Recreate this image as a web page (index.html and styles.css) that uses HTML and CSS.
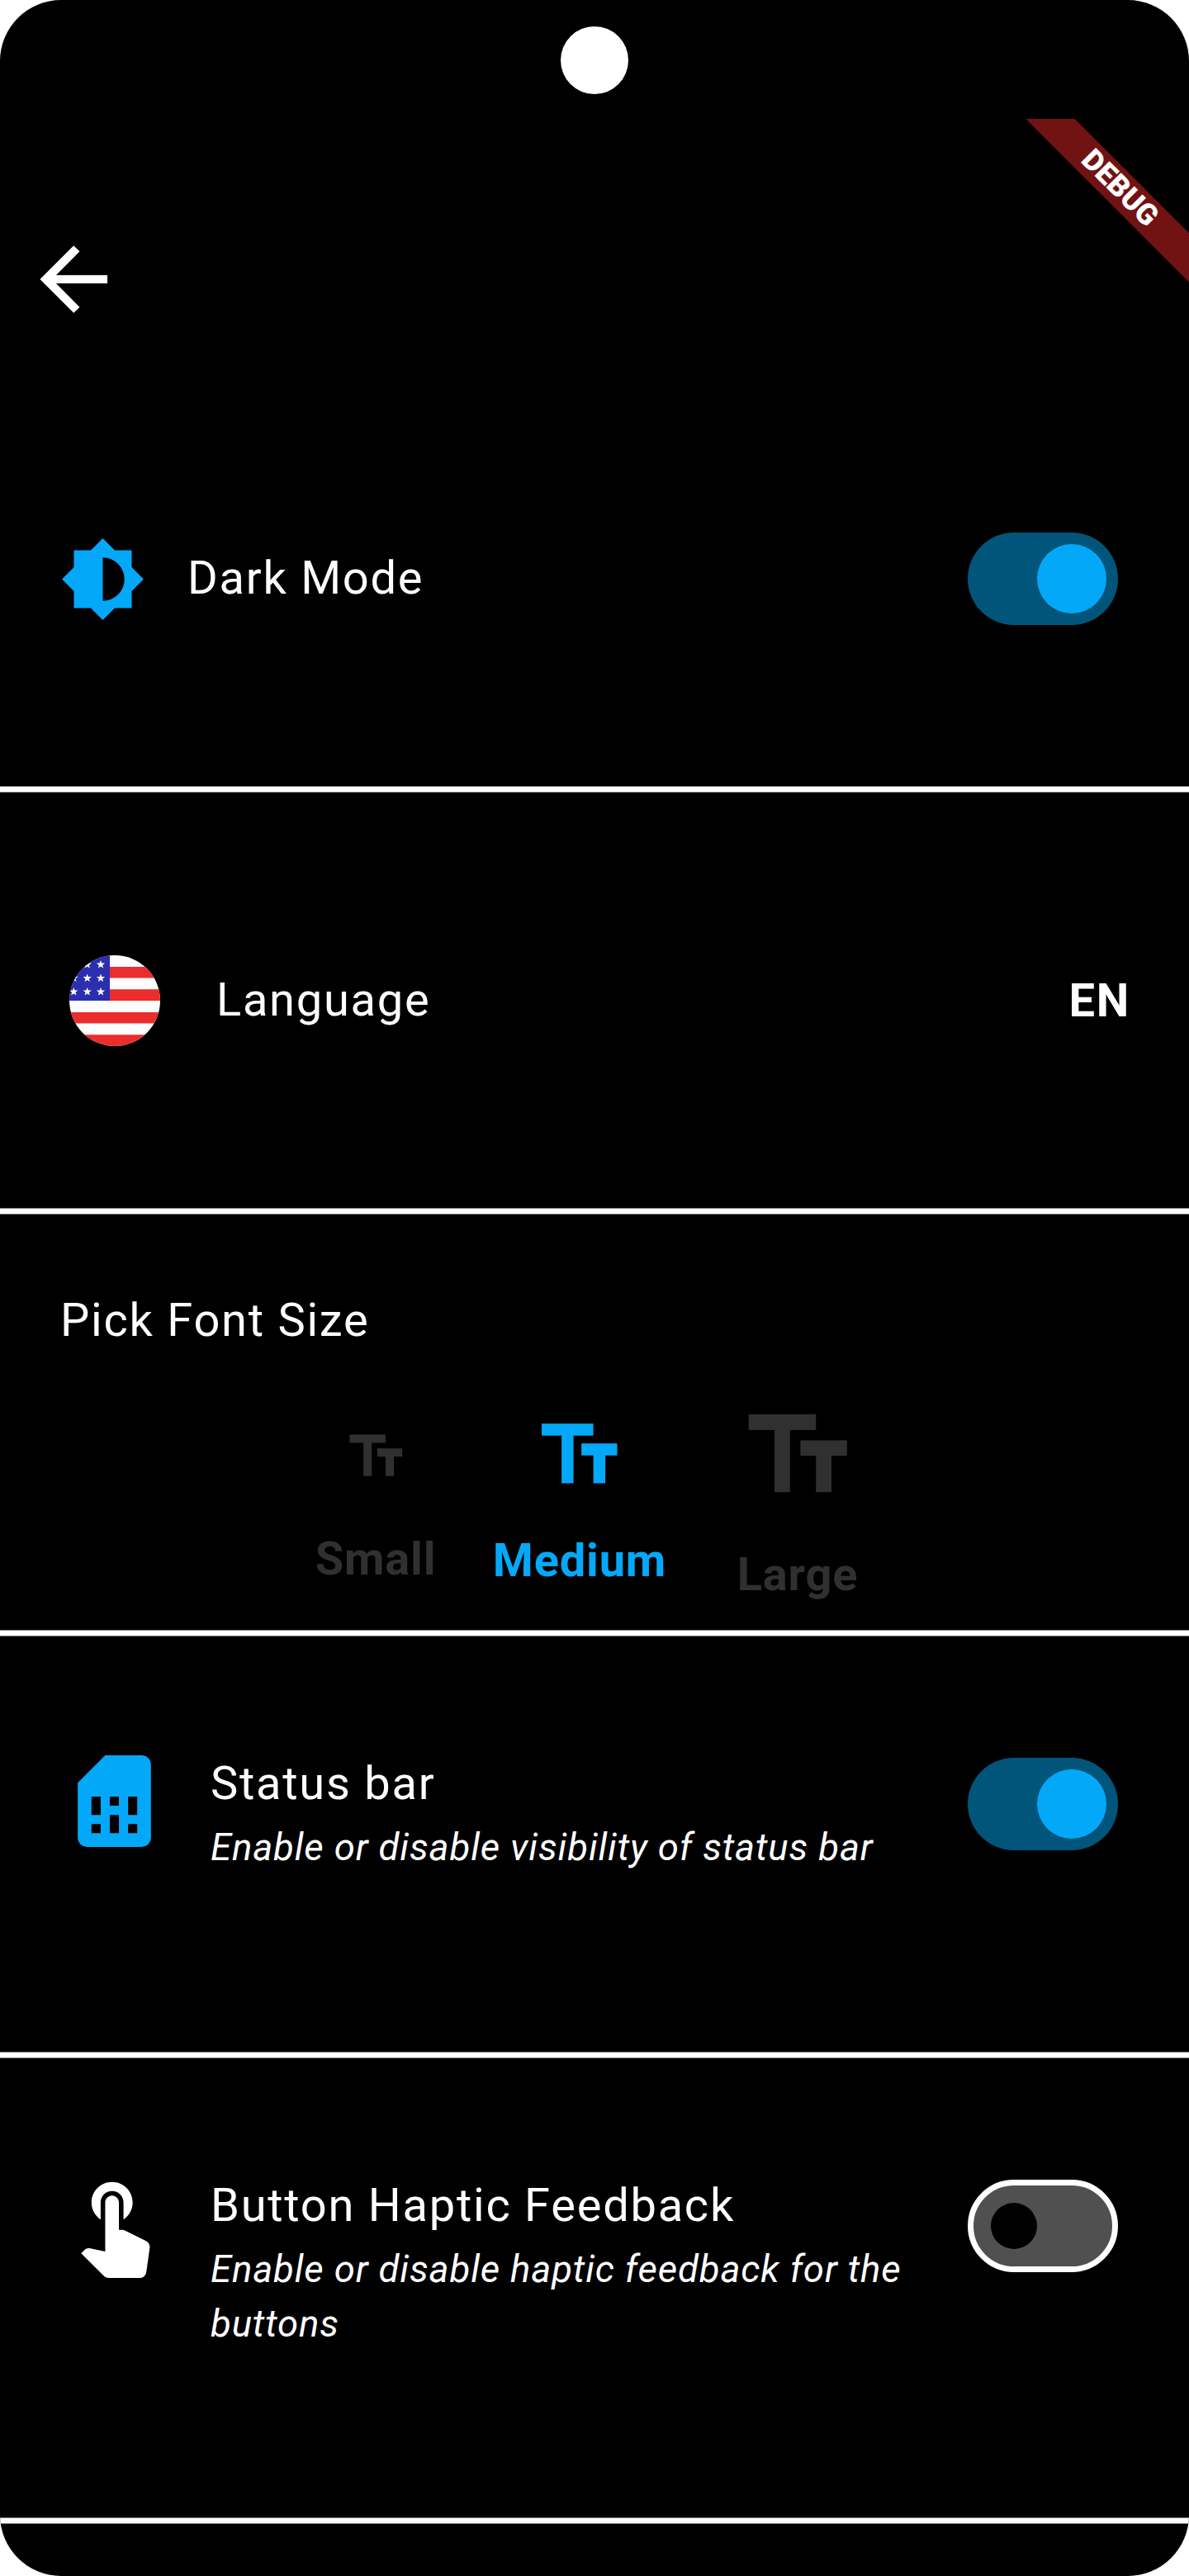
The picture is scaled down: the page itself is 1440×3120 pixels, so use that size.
FILE: index.html
```html
<!DOCTYPE html>
<html lang="en">
<head>
<meta charset="utf-8">
<title>Settings</title>
<link rel="stylesheet" href="styles.css">
</head>
<body>
<main class="phone">
  <div class="camera"></div>
  <div class="banner"><span class="banner-band">DEBUG</span></div>
  <header class="appbar">
    <svg class="icon-back" viewBox="0 0 24 24"><path d="M20 11H7.83l5.59-5.59L12 4l-8 8 8 8 1.41-1.41L7.83 13H20v-2z"/></svg>
  </header>

  <section class="row row-dark">
    <svg class="icon-mode" viewBox="0 0 24 24"><path d="M20 15.31L23.31 12 20 8.69V4h-4.69L12 .69 8.69 4H4v4.69L.69 12 4 15.31V20h4.69L12 23.31 15.31 20H20v-4.69zM12 18V6c3.31 0 6 2.69 6 6s-2.69 6-6 6z"/></svg>
    <span class="title">Dark Mode</span>
    <span class="switch switch-on"><i class="thumb"></i></span>
  </section>
  <div class="divider"></div>

  <section class="row row-language">
    <svg class="flag" viewBox="0 0 110 110">
      <defs>
        <clipPath id="round"><circle cx="55" cy="55" r="55"/></clipPath>
        <path id="star" d="M0-5.2 1.3-1.6 5.2-1.6 2.1.7 3.2 4.4 0 2.2-3.2 4.4-2.1.7-5.2-1.6-1.3-1.6z"/>
      </defs>
      <g clip-path="url(#round)">
        <path fill="#fcfcfc" d="M0 0h110v110H0z"/>
        <path fill="#eb2d2d" d="M0 14h110v13.5H0zM0 41.3h110V55H0zM0 69h110v13.5H0zM0 96.3h110V110H0z"/>
        <path fill="#2b2eaf" d="M0 0h49v55H0z"/>
        <g fill="#fff">
          <use href="#star" x="21.7" y="11.2"/><use href="#star" x="38" y="11.2"/>
          <use href="#star" x="5.3" y="27.7"/><use href="#star" x="21.7" y="27.7"/><use href="#star" x="38" y="27.7"/>
          <use href="#star" x="5.3" y="44.2"/><use href="#star" x="21.7" y="44.2"/><use href="#star" x="38" y="44.2"/>
        </g>
      </g>
    </svg>
    <span class="title">Language</span>
    <span class="code">EN</span>
  </section>
  <div class="divider"></div>

  <section class="fonts">
    <h2 class="title">Pick Font Size</h2>
    <div class="sizes">
      <div class="size size-small">
        <svg viewBox="0 0 24 24"><path d="M2.5 4v3h5v12h3V7h5V4h-13zm19 5h-9v3h3v7h3v-7h3V9z"/></svg>
        <span>Small</span>
      </div>
      <div class="size size-medium">
        <svg viewBox="0 0 24 24"><path d="M2.5 4v3h5v12h3V7h5V4h-13zm19 5h-9v3h3v7h3v-7h3V9z"/></svg>
        <span>Medium</span>
      </div>
      <div class="size size-large">
        <svg viewBox="0 0 24 24"><path d="M2.5 4v3h5v12h3V7h5V4h-13zm19 5h-9v3h3v7h3v-7h3V9z"/></svg>
        <span>Large</span>
      </div>
    </div>
  </section>
  <div class="divider"></div>

  <section class="row row-status">
    <svg class="icon-tile icon-sim" viewBox="0 0 24 24"><path d="M19.99 4c0-1.1-.89-2-1.99-2h-8L4 8v12c0 1.1.9 2 2 2h12.01c1.1 0 1.99-.9 1.99-2l-.01-16zM9 19H7v-2h2v2zm8 0h-2v-2h2v2zm-8-4H7v-4h2v4zm4 4h-2v-4h2v4zm0-6h-2v-2h2v2zm4 2h-2v-4h2v4z"/></svg>
    <div class="text">
      <span class="title">Status bar</span>
      <p class="subtitle">Enable or disable visibility of status bar</p>
    </div>
    <span class="switch switch-on"><i class="thumb"></i></span>
  </section>
  <div class="divider"></div>

  <section class="row row-haptic">
    <svg class="icon-tile icon-touch" viewBox="0 0 24 24"><path d="M9 11.24V7.5C9 6.12 10.12 5 11.5 5S14 6.12 14 7.5v3.74c1.21-.81 2-2.18 2-3.74C16 5.01 13.99 3 11.5 3S7 5.01 7 7.5c0 1.56.79 2.93 2 3.74zm9.84 4.63l-4.54-2.26c-.17-.07-.35-.11-.54-.11H13v-6c0-.83-.67-1.5-1.5-1.5S10 6.67 10 7.5v10.74l-3.43-.72c-.08-.01-.15-.03-.24-.03-.31 0-.59.13-.79.33l-.79.8 4.94 4.94c.27.27.65.44 1.06.44h6.79c.75 0 1.33-.55 1.44-1.28l.75-5.27c.01-.07.02-.14.02-.2 0-.62-.38-1.16-.91-1.38z"/></svg>
    <div class="text">
      <span class="title">Button Haptic Feedback</span>
      <p class="subtitle">Enable or disable haptic feedback for the<br>buttons</p>
    </div>
    <span class="switch switch-off"><i class="thumb"></i></span>
  </section>
  <div class="divider"></div>
</main>
</body>
</html>
```
FILE: styles.css
```css
* { box-sizing: border-box; }
html { background: #fff; }
body { margin: 0; font-family: Roboto, "Liberation Sans", sans-serif; color: #fff; }
svg { display: block; flex: none; }
h2, p { margin: 0; }

.phone {
  position: relative;
  display: flex;
  flex-direction: column;
  width: 1440px;
  height: 3120px;
  background: #000;
  border-radius: 74px;
  overflow: hidden;
}
.camera {
  position: absolute;
  left: 679px;
  top: 32px;
  width: 82px;
  height: 82px;
  border-radius: 50%;
  background: #fff;
}
.banner {
  position: absolute;
  right: 0;
  top: 144px;
  width: 200px;
  height: 200px;
  overflow: hidden;
}
.banner-band {
  position: absolute;
  left: -34px;
  top: 63px;
  width: 300px;
  height: 42px;
  background: #711313;
  font-size: 35.7px;
  font-weight: 900;
  line-height: 41px;
  text-align: center;
  transform: rotate(45deg);
}

.appbar { height: 450px; padding: 277px 0 0 28px; }
.icon-back { width: 122.5px; height: 122.5px; fill: #fff; }

.divider { flex: none; height: 8px; background: #fff; border: solid #7f7f7f; border-width: 1px 0; }

.row { display: flex; align-items: flex-start; padding-right: 86px; }
.title { font-size: 56px; font-weight: 400; line-height: 80px; letter-spacing: 1.75px; white-space: nowrap; }
.row-dark { height: 502px; padding-top: 195px; padding-left: 72px; }
.icon-mode { width: 105px; height: 105px; margin-top: 4px; fill: #03a9f8; }
.row-dark .title { margin: 15px auto 0 50px; }

.switch { display: flex; align-items: center; flex: none; width: 182px; height: 112px; border-radius: 56px; }
.switch-on { justify-content: flex-end; padding-right: 14px; background: #01557b; }
.switch-on .thumb { width: 84px; height: 84px; border-radius: 50%; background: #03a9f8; }
.switch-off { padding-left: 21px; border: 7px solid #fff; background: #505050; }
.switch-off .thumb { width: 56px; height: 56px; border-radius: 50%; background: #000; }

.row-language { height: 503px; padding-top: 197px; padding-left: 84px; padding-right: 71px; }
.flag { width: 110px; height: 110px; }
.row-language .title { margin: 14px auto 0 68px; }
.code { margin-top: 15px; font-size: 56px; font-weight: 700; line-height: 80px; letter-spacing: 1.75px; }

.fonts { height: 503px; padding: 88px 73px 0; }
.sizes { display: flex; align-items: flex-start; padding-left: 309px; }
.size { display: flex; flex-direction: column; align-items: center; color: #303030; fill: #303030; }
.size span { font-size: 56px; font-weight: 700; line-height: 80px; letter-spacing: .8px; }
.size-small { width: 146px; padding-top: 85px; }
.size-small svg { width: 80.5px; height: 80.5px; margin-bottom: 43px; }
.size-medium { width: 210px; margin-left: 69px; padding-top: 66px; color: #03a9f8; fill: #03a9f8; }
.size-medium svg { width: 115.5px; height: 115.5px; margin-bottom: 29px; }
.size-large { width: 146px; margin-left: 86px; padding-top: 49px; }
.size-large svg { width: 150.5px; height: 150.5px; margin-bottom: 28px; }

.icon-tile { width: 133px; height: 133px; }
.text { flex: 1; padding-left: 50px; }
.text .title { display: block; }
.subtitle { margin-top: 5px; font-size: 45.5px; font-style: italic; line-height: 66px; letter-spacing: .875px; white-space: nowrap; }
.row-status { height: 503px; padding-top: 133px; padding-left: 72px; }
.icon-sim { fill: #03a9f8; }
.row-status .text { padding-top: 5px; }
.row-status .switch { margin-top: 14px; }
.row-haptic { height: 556px; padding-top: 133px; padding-left: 72px; }
.icon-touch { fill: #fff; }
.row-haptic .text { padding-top: 5px; }
.row-haptic .switch { margin-top: 14px; }
```
